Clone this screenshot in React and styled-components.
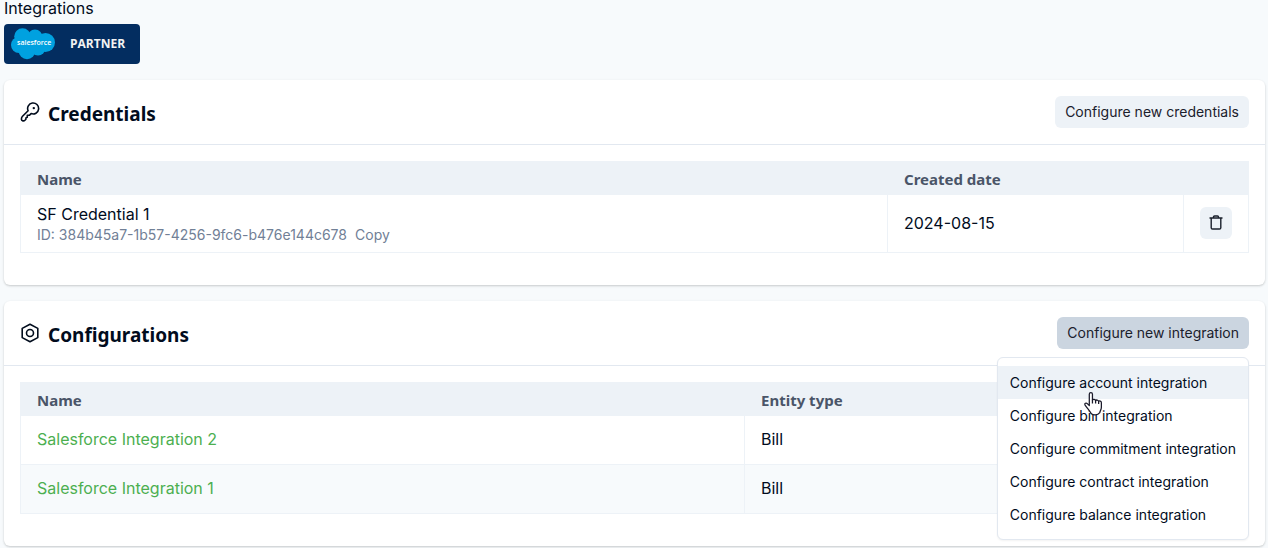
import React from 'react'
import styled, { createGlobalStyle } from 'styled-components'

const GlobalStyle = createGlobalStyle`
  * {
    box-sizing: border-box;
  }
  body {
    margin: 0;
    background: #f7fafc;
    color: #010c1d;
    font-family: 'Inter', sans-serif;
    font-size: 16px;
    line-height: 24px;
  }
`

const Page = styled.main`
  display: flex;
  flex-direction: column;
  align-items: stretch;
  gap: 16px;
  padding: 0 3px 2px 4px;
`

const Intro = styled.header`
  display: flex;
  flex-direction: column;
  align-items: flex-start;
  gap: 8px;
`

const PageTitle = styled.div`
  line-height: 16px;
`

const Badge = styled.svg`
  display: block;
  border-radius: 4px;
`

const Card = styled.section`
  background: #fff;
  border-radius: 6px;
  box-shadow: 0 1px 3px rgba(0, 0, 0, 0.1), 0 1px 2px rgba(0, 0, 0, 0.1);
`

const CardHeader = styled.div`
  display: flex;
  align-items: center;
  justify-content: space-between;
  padding: 16px;
  border-bottom: 1px solid #e2e8f0;
`

const CardTitle = styled.h2`
  display: flex;
  align-items: center;
  gap: 8px;
  margin: 0;
  font-family: 'Noto Sans', sans-serif;
  font-size: 19px;
  font-weight: 700;
  line-height: 28px;
`

const CardTitleText = styled.span`
  padding-top: 3px;
`

const CardBody = styled.div`
  padding: 16px 16px 32px;
`

const Button = styled.button`
  display: inline-flex;
  align-items: center;
  justify-content: center;
  height: 32px;
  padding: 0 ${(props) => (props.$square ? '8px' : '10px')} 1px;
  border: none;
  border-radius: 6px;
  background: ${(props) => (props.$active ? '#cbd5e0' : '#edf2f7')};
  color: #1a202c;
  font-family: inherit;
  font-size: 14px;
  vertical-align: top;
  cursor: pointer;
`

const Table = styled.table`
  width: 100%;
  table-layout: fixed;
  border-spacing: 0;
  border-right: 1px solid #edf2f7;
`

const Col = styled.col`
  width: ${(props) => props.$width || 'auto'};
`

const Th = styled.th`
  height: 34px;
  padding: 2px 17px 0;
  background: #edf2f7;
  color: #4a5568;
  font-family: 'Noto Sans', sans-serif;
  font-size: 15px;
  font-weight: 700;
  text-align: left;
`

const Tr = styled.tr`
  background: ${(props) => (props.$striped ? '#f7fafc' : '#fff')};
`

const Td = styled.td`
  height: ${(props) => (props.$tall ? '58px' : '49px')};
  padding: 0 16px 2px;
  border-left: 1px solid #edf2f7;
  border-bottom: 1px solid #edf2f7;
`

const Detail = styled.div`
  display: flex;
  gap: 8px;
  color: #718096;
  font-size: 14px;
  line-height: 18px;
`

const CopyButton = styled.button`
  padding: 0;
  border: none;
  background: none;
  color: inherit;
  font: inherit;
  cursor: pointer;
`

const Link = styled.a`
  color: #4caf50;
  text-decoration: none;
`

const MenuWrap = styled.div`
  position: relative;
`

const Menu = styled.div`
  position: absolute;
  top: 40px;
  right: 0;
  z-index: 1;
  display: flex;
  flex-direction: column;
  padding: 8px 0;
  border: 1px solid #e2e8f0;
  border-radius: 6px;
  background: #fff;
  box-shadow: 0 1px 2px rgba(0, 0, 0, 0.05);
`

const MenuItem = styled.button`
  padding: 6px 12px;
  border: none;
  background: ${(props) => (props.$active ? '#edf2f7' : 'none')};
  color: inherit;
  font-family: inherit;
  font-size: 14px;
  line-height: 21px;
  text-align: left;
  white-space: nowrap;
  cursor: pointer;
`

const Pointer = styled.svg`
  position: absolute;
  top: 33px;
  left: 85px;
  pointer-events: none;
`

const KeyIcon = () => (
  <svg width="20" height="20" viewBox="0 0 20 20" fill="none" stroke="currentColor" strokeWidth="1.6" strokeLinejoin="round">
    <path d="M8.100 8.700A5.500 5.500 0 1 1 11.100 11.600L9.300 13.300H7.300V15.200L5.900 15.900V17.200L4.900 18.300C4 19.200 1.400 19.200 1.400 17.300C1.400 16 1.500 15.300 2.300 14.500Z" />
    <circle cx="13.800" cy="6.100" r="1.200" fill="currentColor" stroke="none" />
  </svg>
)

const NutIcon = () => (
  <svg width="20" height="20" viewBox="0 0 20 20" fill="none" stroke="currentColor" strokeWidth="1.6" strokeLinejoin="round">
    <path d="M10 1.300 17.800 5.400v9.200L10 18.700 2.200 14.600V5.400Z" />
    <circle cx="10" cy="10" r="3.500" />
  </svg>
)

const TrashIcon = () => (
  <svg width="16" height="16" viewBox="0 0 16 16" fill="none" stroke="currentColor" strokeWidth="1.400" strokeLinejoin="round">
    <path d="M1.500 4h13M5.500 4V3a1 1 0 0 1 1-1h3a1 1 0 0 1 1 1v1M3.200 4v9.700a1.300 1.300 0 0 0 1.300 1.300h7a1.300 1.300 0 0 0 1.300-1.300V4" />
  </svg>
)

const HandPointer = () => (
  <Pointer width="21" height="26" viewBox="0 0 20 24" fill="#fff" stroke="#1a1a2a" strokeWidth="1.200" strokeLinejoin="round" aria-hidden="true">
    <path d="M6 13.500V2.700c0-2 3-2 3 0v5.600c.4-1.200 2.800-1 3 .5.500-1 2.700-.7 2.900.7.700-.8 2.600-.3 2.600 1.200v4.500c0 2.500-1.500 3.500-1.500 5.100-2 2.800-6.500 2.800-8.500.5-.6-2.100-3.300-4.300-5.500-7.700-1-1.700 1-2.600 2.100-1.500Z" />
    <path d="M9 8v3.500M12 8.500v3M14.900 9.500v2.500" fill="none" />
  </Pointer>
)

const PartnerBadge = () => (
  <Badge width="136" height="40" viewBox="0 0 136 40" role="img" aria-label="Salesforce partner">
    <rect width="136" height="40" fill="#032d60" />
    <g fill="#00a1e0">
      <circle cx="18.500" cy="12.500" r="8.300" />
      <circle cx="31" cy="13" r="7.500" />
      <circle cx="41.500" cy="18.500" r="9.500" />
      <circle cx="15" cy="21" r="8" />
      <circle cx="23" cy="27" r="8.300" />
      <circle cx="34" cy="24" r="7.500" />
      <rect x="14" y="12" width="27" height="15" />
    </g>
    <text x="13" y="21" fill="#fff" fontFamily="Open Sans, sans-serif" fontSize="7" fontWeight="600">salesforce</text>
    <text x="66" y="24" fill="#f3f3f3" fontFamily="Open Sans, sans-serif" fontSize="12" fontWeight="700">PARTNER</text>
  </Badge>
)

const menuItems = ['account', 'bill', 'commitment', 'contract', 'balance']
const integrations = ['Salesforce Integration 2', 'Salesforce Integration 1']

const App = () => {
  return (
    <>
      <GlobalStyle />
      <Page>
        <Intro>
          <PageTitle>Integrations</PageTitle>
          <PartnerBadge />
        </Intro>
        <Card>
          <CardHeader>
            <CardTitle>
              <KeyIcon />
              <CardTitleText>Credentials</CardTitleText>
            </CardTitle>
            <Button type="button">Configure new credentials</Button>
          </CardHeader>
          <CardBody>
            <Table>
              <colgroup>
                <Col />
                <Col $width="296px" />
                <Col $width="65px" />
              </colgroup>
              <thead>
                <tr>
                  <Th>Name</Th>
                  <Th>Created date</Th>
                  <Th aria-label="Actions" />
                </tr>
              </thead>
              <tbody>
                <Tr>
                  <Td $tall>
                    SF Credential 1
                    <Detail>
                      <span>ID: 384b45a7-1b57-4256-9fc6-b476e144c678</span>
                      <CopyButton type="button">Copy</CopyButton>
                    </Detail>
                  </Td>
                  <Td $tall>2024-08-15</Td>
                  <Td $tall>
                    <Button type="button" $square aria-label="Delete"><TrashIcon /></Button>
                  </Td>
                </Tr>
              </tbody>
            </Table>
          </CardBody>
        </Card>
        <Card>
          <CardHeader>
            <CardTitle>
              <NutIcon />
              <CardTitleText>Configurations</CardTitleText>
            </CardTitle>
            <MenuWrap>
              <Button type="button" $active>Configure new integration</Button>
              <Menu>
                {menuItems.map((item, i) => (
                  <MenuItem key={item} type="button" $active={i === 0}>Configure {item} integration</MenuItem>
                ))}
                <HandPointer />
              </Menu>
            </MenuWrap>
          </CardHeader>
          <CardBody>
            <Table>
              <colgroup>
                <Col />
                <Col $width="504px" />
              </colgroup>
              <thead>
                <tr>
                  <Th>Name</Th>
                  <Th>Entity type</Th>
                </tr>
              </thead>
              <tbody>
                {integrations.map((name, i) => (
                  <Tr key={name} $striped={i % 2 === 1}>
                    <Td><Link href="#">{name}</Link></Td>
                    <Td>Bill</Td>
                  </Tr>
                ))}
              </tbody>
            </Table>
          </CardBody>
        </Card>
      </Page>
    </>
  )
}

export default App
